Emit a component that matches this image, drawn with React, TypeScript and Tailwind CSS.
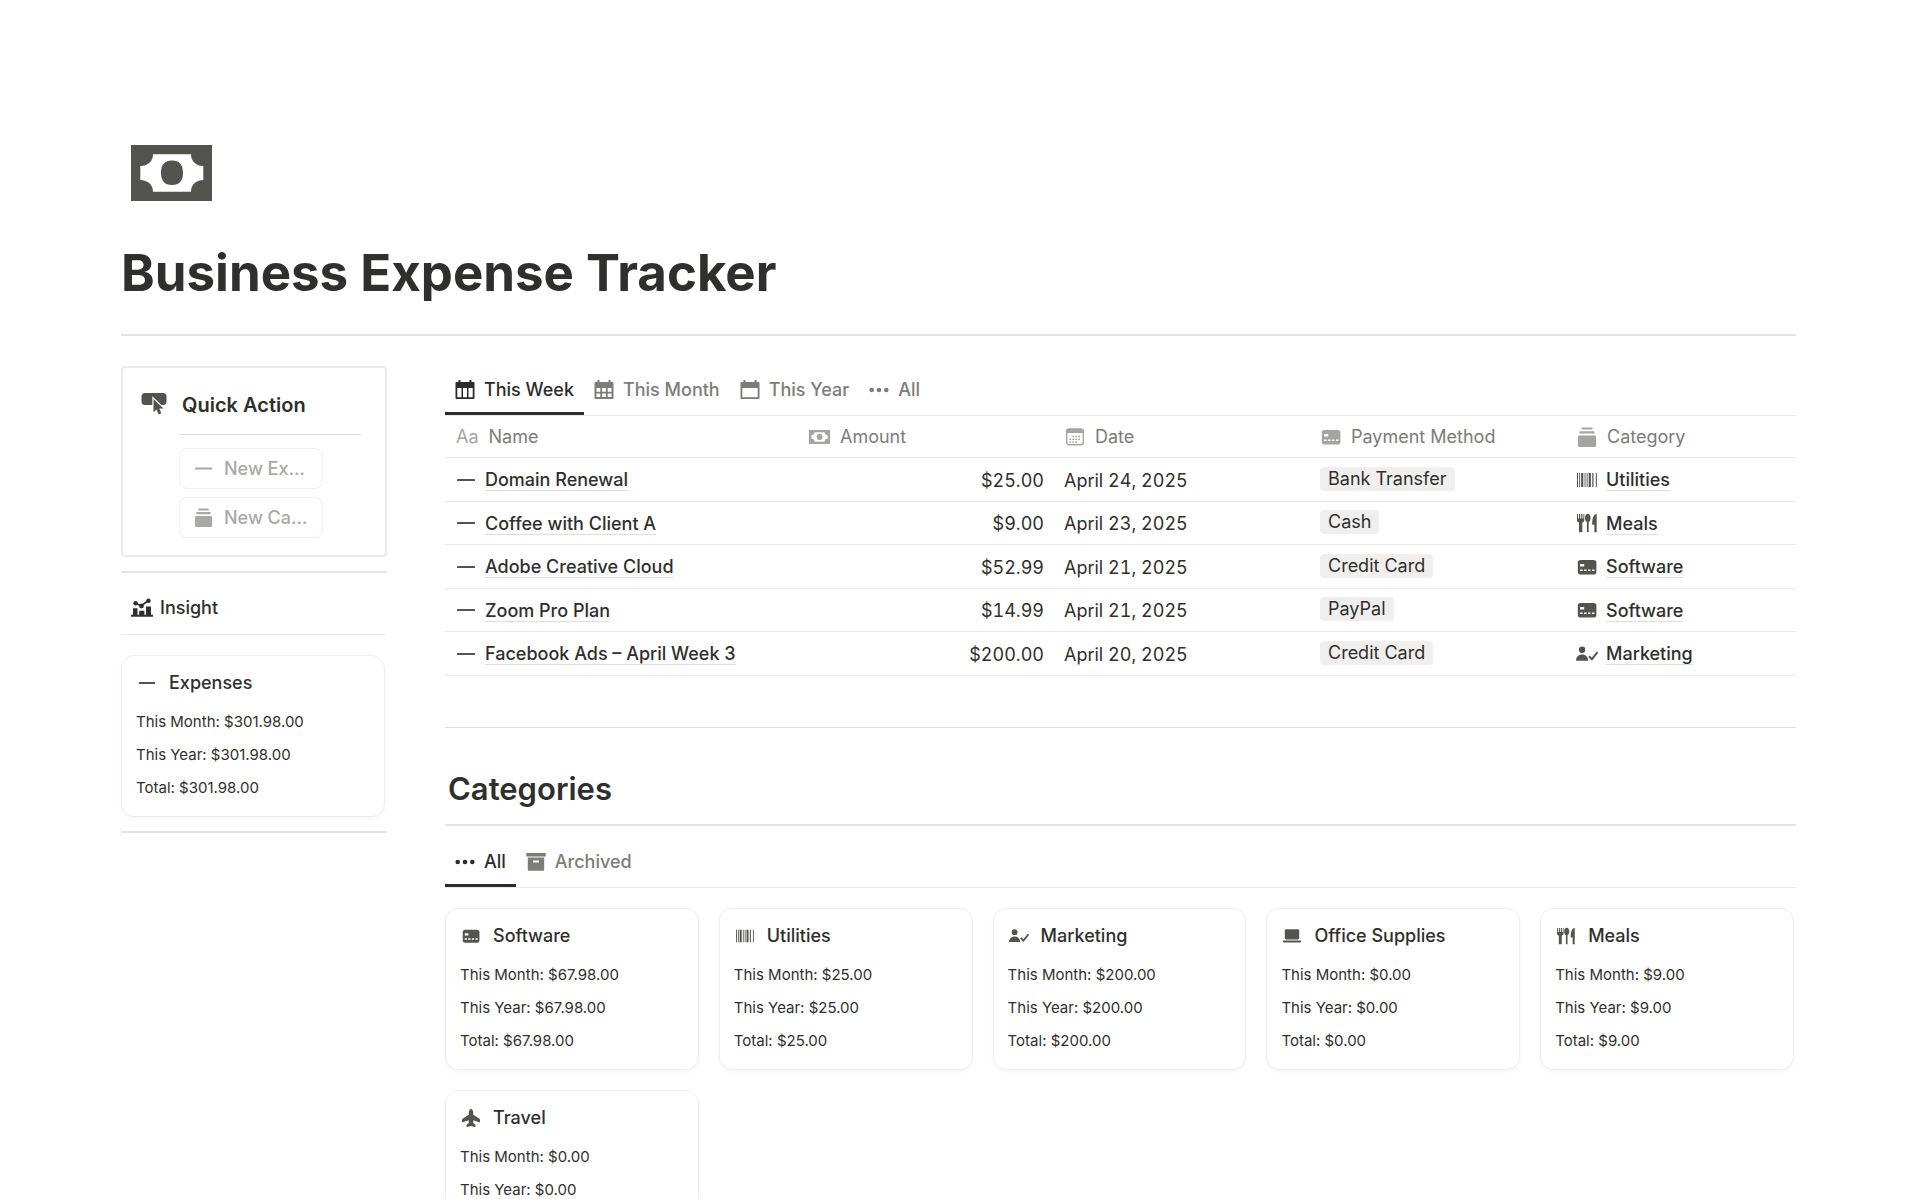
import { useState } from "react";
import type { ComponentType, ReactNode } from "react";
import clsx from "clsx";
import { FaPlaneUp } from "react-icons/fa6";

interface IconProps {
  className?: string;
}

function MoneyIcon({ className }: IconProps) {
  return (
    <svg viewBox="0 0 81 57" preserveAspectRatio="none" fill="currentColor" className={className} aria-hidden="true">
      <path
        fillRule="evenodd"
        d="M0 0h81v57H0zM22 9.5C22 16.500 17 21.500 9.300 21.500V35.500C17 35.500 22 40.500 22 47.500H60C60 40.500 65 35.500 72.300 35.500V21.500C65 21.500 60 16.500 60 9.500z"
      />
      <path d="M41 15.700c7.500 0 11 4.500 11 12.500s-3.500 12.500-11 12.500-11-4.500-11-12.500 3.500-12.500 11-12.500z" />
    </svg>
  );
}

function ButtonCursorIcon({ className }: IconProps) {
  return (
    <svg viewBox="0 0 26 24" fill="currentColor" className={className} aria-hidden="true">
      <rect x="0.500" y="1" width="25" height="12" rx="3.500" />
      <path
        d="M12.500 7v13.200l3.100-2.600 2 4.800 2.700-1.100-2-4.700h4.200z"
        stroke="white"
        strokeWidth="2.400"
        paintOrder="stroke"
      />
    </svg>
  );
}

function MinusIcon({ className }: IconProps) {
  return (
    <svg viewBox="0 0 20 20" fill="currentColor" className={className} aria-hidden="true">
      <rect x="1" y="9" width="18" height="2" rx="0.500" />
    </svg>
  );
}

function StackIcon({ className }: IconProps) {
  return (
    <svg viewBox="0 0 20 20" fill="currentColor" className={className} aria-hidden="true">
      <rect x="4.500" y="0.500" width="11" height="2" rx="0.500" />
      <rect x="2.500" y="4.300" width="15" height="2.200" rx="0.500" />
      <rect x="1" y="8.500" width="18" height="11.500" rx="1.200" />
    </svg>
  );
}

function InsightIcon({ className }: IconProps) {
  return (
    <svg viewBox="0 0 22 20" fill="currentColor" className={className} aria-hidden="true">
      <path d="M0 16.800h2v-6.600h4.500v6.600h1.700v-4h5.200v4h1.600V8.500h5v8.300H22v2H0z" />
      <path d="M4.500 5l5.500 3 7.500-5.500" fill="none" stroke="currentColor" strokeWidth="1.600" />
      <circle cx="4.600" cy="5.200" r="2.200" />
      <circle cx="10.500" cy="8" r="2.400" />
      <circle cx="17.500" cy="2.700" r="2.200" />
    </svg>
  );
}

function CalendarFrame({ className, children }: { className?: string; children?: ReactNode }) {
  return (
    <svg viewBox="0 0 20 20" fill="currentColor" className={className} aria-hidden="true">
      <path d="M3.500 0h2V2h9V0h2V2H18.500a1 1 0 0 1 1 1V18a1 1 0 0 1-1 1H1.500a1 1 0 0 1-1-1V3a1 1 0 0 1 1-1h2z" />
      {children}
    </svg>
  );
}

function WeekIcon({ className }: IconProps) {
  return (
    <CalendarFrame className={className}>
      <path d="M2.300 8h4.200v9.200H2.300zM8 8h4v9.200H8zM13.500 8h4.200v9.200h-4.200z" fill="white" />
    </CalendarFrame>
  );
}

function MonthIcon({ className }: IconProps) {
  return (
    <CalendarFrame className={className}>
      <path
        d="M2.500 8h3.800v3.700H2.500zM8.100 8h3.800v3.700H8.100zM13.700 8h3.800v3.700h-3.800zM2.500 13.500h3.800v3.600H2.500zM8.100 13.500h3.800v3.600H8.100zM13.700 13.500h3.800v3.600h-3.800z"
        fill="white"
      />
    </CalendarFrame>
  );
}

function YearIcon({ className }: IconProps) {
  return (
    <CalendarFrame className={className}>
      <path d="M2.300 8h15.400v9.200H2.300z" fill="white" />
    </CalendarFrame>
  );
}

function DotsIcon({ className }: IconProps) {
  return (
    <svg viewBox="0 0 20 20" fill="currentColor" className={className} aria-hidden="true">
      <circle cx="2.700" cy="10" r="2.300" />
      <circle cx="10" cy="10" r="2.300" />
      <circle cx="17.300" cy="10" r="2.300" />
    </svg>
  );
}

function DateIcon({ className }: IconProps) {
  return (
    <svg viewBox="0 0 20 20" fill="currentColor" className={className} aria-hidden="true">
      <rect x="1.700" y="2.200" width="16.600" height="15.600" rx="2.500" fill="none" stroke="currentColor" strokeWidth="1.400" />
      <path d="M1 4.500A3 3 0 0 1 4 1.500h12a3 3 0 0 1 3 3V6H1z" />
      <path d="M7.500 9.500h8.500M4.500 12.300H16M4.500 15h8.500" stroke="currentColor" strokeWidth="1.500" strokeDasharray="1.600 1.300" />
    </svg>
  );
}

function CardIcon({ className }: IconProps) {
  return (
    <svg viewBox="0 0 20 20" fill="currentColor" className={className} aria-hidden="true">
      <rect x="0.800" y="3" width="18.600" height="14.500" rx="2.800" />
      <rect x="3" y="7" width="4.200" height="2.500" rx="0.600" fill="white" />
      <path d="M3 13.300h2.600M7 13.300h2.600M11 13.300h2.400M15 13.300h2.400" stroke="white" strokeWidth="1.600" />
    </svg>
  );
}

function BarcodeIcon({ className }: IconProps) {
  return (
    <svg viewBox="0 0 20 20" fill="currentColor" className={className} aria-hidden="true">
      <path d="M0 3h1v14H0zM2.200 3h.9v14h-.9zM4.100 3h2.200v14H4.100zM7.600 3h.9v14h-.9zM9.700 3h.9v14h-.9zM11.700 3h2.200v14h-2.200zM15.300 3h1.200v14h-1.200zM18.800 3h1v14h-1z" />
    </svg>
  );
}

function UtensilsIcon({ className }: IconProps) {
  return (
    <svg viewBox="0 0 20 20" fill="currentColor" className={className} aria-hidden="true">
      <path d="M0 1h1v4.500h1V1h1.200v4.500h1V1h1.200v4.500h1V1h.9v6.200c0 1.300-.8 2-2 2.300v9.700H2V9.500C.8 9.200 0 8.500 0 7.200z" />
      <path d="M10.800.8c1.700 0 2.800 1.800 2.800 4.200 0 2-.8 3.500-1.900 4.100v10H9.900v-10C8.800 8.500 8 7 8 5 8 2.600 9.100.8 10.800.8z" />
      <path d="M19.700.8v18.400h-2.300v-7.500h-2.200c0-5.500.8-9.700 4.500-10.900z" />
    </svg>
  );
}

function UserCheckIcon({ className }: IconProps) {
  return (
    <svg viewBox="0 0 22 20" fill="currentColor" className={className} aria-hidden="true">
      <circle cx="6.100" cy="5.700" r="3.200" />
      <path d="M0 16.700c0-3.600 2.500-6.200 6.100-6.200s6.100 2.600 6.100 6.200z" />
      <path d="M13 12.200l2.900 3 5.700-7.200" fill="none" stroke="currentColor" strokeWidth="2" />
    </svg>
  );
}

function LaptopIcon({ className }: IconProps) {
  return (
    <svg viewBox="0 0 20 20" fill="currentColor" className={className} aria-hidden="true">
      <rect x="2" y="2.500" width="16" height="11.300" rx="1.500" />
      <path d="M0 15h20v.8a1.500 1.500 0 0 1-1.500 1.500h-17A1.500 1.500 0 0 1 0 15.800z" />
    </svg>
  );
}

function ArchiveIcon({ className }: IconProps) {
  return (
    <svg viewBox="0 0 20 20" fill="currentColor" className={className} aria-hidden="true">
      <rect x="0.300" y="1" width="19.400" height="3.400" rx="0.500" />
      <path fillRule="evenodd" d="M1.800 5.600h16.400v12.200a1 1 0 0 1-1 1H2.800a1 1 0 0 1-1-1zM7 8.500v2h6v-2z" />
    </svg>
  );
}

type Icon = ComponentType<IconProps>;

interface Tab {
  label: string;
  icon: Icon;
}

const expenseTabs: Tab[] = [
  { label: "This Week", icon: WeekIcon },
  { label: "This Month", icon: MonthIcon },
  { label: "This Year", icon: YearIcon },
  { label: "All", icon: DotsIcon },
];

const categoryTabs: Tab[] = [
  { label: "All", icon: DotsIcon },
  { label: "Archived", icon: ArchiveIcon },
];

const categoryIcons: Record<string, Icon> = {
  Software: CardIcon,
  Utilities: BarcodeIcon,
  Marketing: UserCheckIcon,
  "Office Supplies": LaptopIcon,
  Meals: UtensilsIcon,
  Travel: FaPlaneUp,
};

const expenses = [
  { name: "Domain Renewal", amount: "$25.00", date: "April 24, 2025", method: "Bank Transfer", category: "Utilities" },
  { name: "Coffee with Client A", amount: "$9.00", date: "April 23, 2025", method: "Cash", category: "Meals" },
  { name: "Adobe Creative Cloud", amount: "$52.99", date: "April 21, 2025", method: "Credit Card", category: "Software" },
  { name: "Zoom Pro Plan", amount: "$14.99", date: "April 21, 2025", method: "PayPal", category: "Software" },
  { name: "Facebook Ads – April Week 3", amount: "$200.00", date: "April 20, 2025", method: "Credit Card", category: "Marketing" },
];

const categories = [
  { name: "Software", total: "$67.98.00" },
  { name: "Utilities", total: "$25.00" },
  { name: "Marketing", total: "$200.00" },
  { name: "Office Supplies", total: "$0.00" },
  { name: "Meals", total: "$9.00" },
  { name: "Travel", total: "$0.00" },
];

function TabBar({ tabs }: { tabs: Tab[] }) {
  const [active, setActive] = useState(tabs[0].label);

  return (
    <div role="tablist" className="flex border-b border-[#e9e9e7]">
      {tabs.map(({ label, icon: TabIcon }) => (
        <button
          key={label}
          type="button"
          role="tab"
          aria-selected={label === active}
          onClick={() => setActive(label)}
          className={clsx(
            "flex h-[49px] items-center gap-[9px] border-b-[3px] px-[10px] pt-[2px] font-medium",
            label === active ? "border-[#2c2c2b] text-[#2c2c2b]" : "border-transparent text-[#7d7c78]"
          )}
        >
          <TabIcon className="size-5" />
          {label}
        </button>
      ))}
    </div>
  );
}

function SummaryCard({ title, icon: CardTitleIcon, total }: { title: string; icon: Icon; total: string }) {
  return (
    <article className="rounded-[13px] border border-[#ededeb] px-[14px] pt-[15px] pb-3 shadow-[0_2px_4px_rgba(0,0,0,0.04)]">
      <h3 className="flex items-center gap-[11px] font-medium leading-6">
        <span className="flex w-[22px] justify-center text-[#55534e]">
          <CardTitleIcon className="h-[18px] w-5" />
        </span>
        {title}
      </h3>
      <div className="mt-[10px] text-[15px] leading-[33px]">
        <p>This Month: {total}</p>
        <p>This Year: {total}</p>
        <p>Total: {total}</p>
      </div>
    </article>
  );
}

function HeaderCell({ label, icon, className }: { label: string; icon: ReactNode; className?: string }) {
  return (
    <th className={clsx("h-[42px] border-b border-[#e9e9e7] px-[11px] font-normal text-[#7d7c78]", className)}>
      <span className="flex items-center gap-[10px]">
        <span className="text-[#a5a4a1]">{icon}</span>
        {label}
      </span>
    </th>
  );
}

function RecordLink({ label, icon: LinkIcon }: { label: string; icon: Icon }) {
  return (
    <span className="flex items-center gap-2">
      <LinkIcon className="h-5 w-[22px] text-[#55534e]" />
      <a href="#" className="border-b border-[#dededc] pt-[2px] font-medium leading-5">
        {label}
      </a>
    </span>
  );
}

function ExpenseTable() {
  return (
    <table className="w-full table-fixed border-separate border-spacing-0 text-left">
      <thead>
        <tr>
          <HeaderCell label="Name" icon="Aa" />
          <HeaderCell label="Amount" icon={<MoneyIcon className="h-[14px] w-[21px]" />} className="w-64" />
          <HeaderCell label="Date" icon={<DateIcon className="size-5" />} className="w-64" />
          <HeaderCell label="Payment Method" icon={<CardIcon className="size-5" />} className="w-64" />
          <HeaderCell label="Category" icon={<StackIcon className="size-5" />} className="w-[230px]" />
        </tr>
      </thead>
      <tbody>
        {expenses.map((row) => (
          <tr
            key={row.name}
            className="[&>td]:border-b [&>td]:border-[#e9e9e7] [&>td]:px-[10px] odd:[&>td]:h-11 even:[&>td]:h-[43px]"
          >
            <td>
              <RecordLink label={row.name} icon={MinusIcon} />
            </td>
            <td className="pt-[2px] text-right tabular-nums">{row.amount}</td>
            <td className="pt-[2px] tabular-nums">{row.date}</td>
            <td className="pb-[2px]">
              <span className="block w-fit rounded bg-[#f0efed] px-2 leading-6">{row.method}</span>
            </td>
            <td>
              <RecordLink label={row.category} icon={categoryIcons[row.category]} />
            </td>
          </tr>
        ))}
      </tbody>
    </table>
  );
}

function ActionButton({ label, icon: ActionIcon }: { label: string; icon: Icon }) {
  return (
    <button
      type="button"
      className="flex h-[41px] w-36 items-center gap-[11px] rounded-lg border border-[#efefed] pl-[14px] font-medium text-[#a9a8a5]"
    >
      <ActionIcon className="size-[19px]" />
      {label}
    </button>
  );
}

function Sidebar() {
  return (
    <aside className="w-[266px] shrink-0">
      <section className="flex gap-3 rounded border-2 border-[#ebebe9] px-[18px] pt-[23px] pb-[17px]">
        <ButtonCursorIcon className="mt-px h-6 w-[26px] shrink-0 text-[#55534e]" />
        <div className="flex-1 pr-[6px]">
          <h2 className="pl-[3px] text-xl font-semibold leading-7">Quick Action</h2>
          <hr className="mt-[15px] mb-[13px] border-[#dededc]" />
          <div className="flex flex-col gap-2">
            <ActionButton label="New Ex…" icon={MinusIcon} />
            <ActionButton label="New Ca…" icon={StackIcon} />
          </div>
        </div>
      </section>
      <hr className="mt-[14px] border-t-2 border-[#e4e4e2]" />
      <section className="pr-[2px]">
        <h2 className="mt-3 flex h-[50px] items-center gap-[7px] border-b border-[#e9e9e7] px-[10px] pb-[3px] font-medium">
          <InsightIcon className="h-5 w-[22px]" />
          Insight
        </h2>
        <div className="mt-5">
          <SummaryCard title="Expenses" icon={MinusIcon} total="$301.98.00" />
        </div>
      </section>
      <hr className="mt-[14px] border-t-2 border-[#e4e4e2]" />
    </aside>
  );
}

export default function App() {
  return (
    <div className="min-h-screen bg-white pt-[145px] pr-[124px] pb-16 pl-[121px] font-['Inter',sans-serif] text-lg leading-6 text-[#2f2f2d]">
      <header>
        <MoneyIcon className="ml-[10px] h-14 w-[81px] text-[#55534e]" />
        <h1 className="mt-[41px] text-[51px] font-bold leading-[62px]">Business Expense Tracker</h1>
      </header>
      <hr className="mt-[30px] border-t-2 border-[#e4e4e2]" />
      <div className="mt-[30px] flex gap-[58px]">
        <Sidebar />
        <main className="min-w-0 flex-1">
          <TabBar tabs={expenseTabs} />
          <ExpenseTable />
          <hr className="mt-[51px] mb-[43px] border-[#dededc]" />
          <h2 className="pl-[3px] text-[31px] font-semibold leading-9">Categories</h2>
          <hr className="mt-[17px] mb-3 border-t-2 border-[#e4e4e2]" />
          <TabBar tabs={categoryTabs} />
          <div className="mt-5 grid grid-cols-5 gap-5 pr-[2px]">
            {categories.map((category) => (
              <SummaryCard
                key={category.name}
                title={category.name}
                icon={categoryIcons[category.name]}
                total={category.total}
              />
            ))}
          </div>
        </main>
      </div>
    </div>
  );
}
